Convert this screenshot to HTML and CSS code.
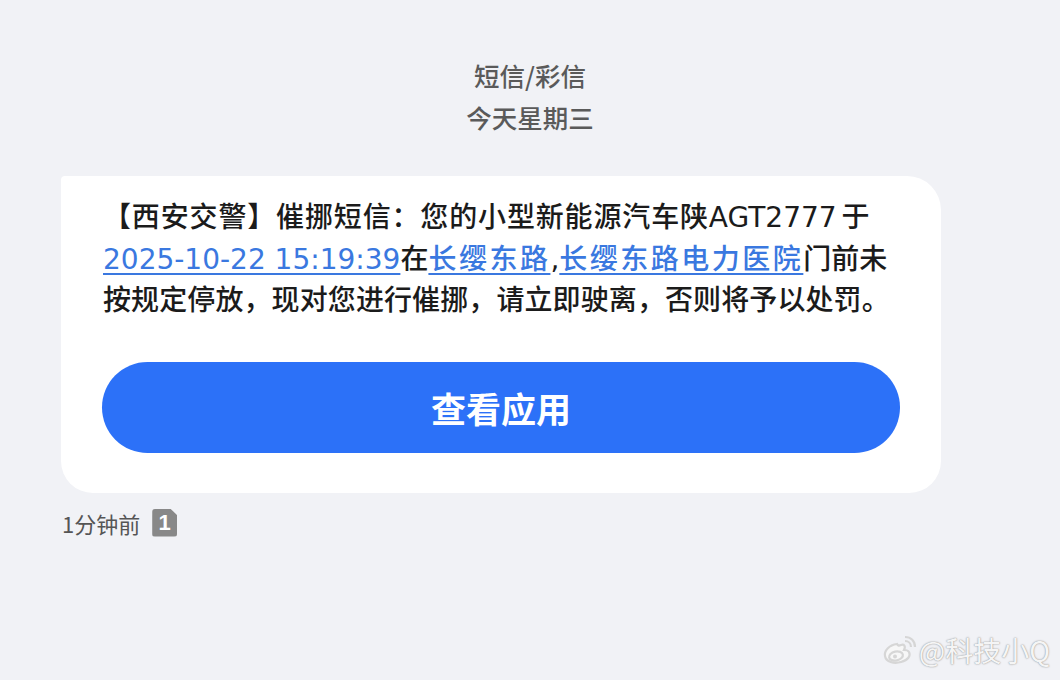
FILE: index.html
```html
<!DOCTYPE html>
<html lang="zh-CN">
<head>
  <meta charset="UTF-8" />
  <title>短信/彩信</title>
  <link rel="stylesheet" href="styles.css">
</head>
<body>

<header class="thread-head">
  <div class="head-line">短信/彩信</div>
  <div class="head-line">今天星期三</div>
</header>

<section class="bubble">
  <p class="msg"><span class="row-1">【西安交警】催挪短信：您的小型新能源汽车陕<span class="latin">AGT2777</span><span class="gap"></span>于</span><br><a class="link latin" href="#">2025-10-22 15:19:39</a>在<a class="link wide" href="#">长缨东路</a><span class="latin">,</span><a class="link wide" href="#">长缨东路电力医院</a>门前未<br><span class="row-3">按规定停放，现对您进行催挪，请立即驶离，否则将予以处罚。</span></p>
  <button class="app-btn">查看应用</button>
</section>

<div class="meta">
  <span class="ago">1分钟前</span>
  <span class="sim">1</span>
</div>

<div class="watermark">
  <svg class="weibo" width="34" height="30" viewBox="0 0 34 30">
    <g fill="none" stroke="#d6d6d6" stroke-width="2.2">
      <path d="M14 9 C6 10 1 16 2 21 C3 27 11 29 18 27 C25 25 28 21 26 17 C25 15 23 15 21 15 C23 11 21 9 18 10 C16 11 15 11 14 9 Z" fill="#f7f7f7"/>
      <ellipse cx="13" cy="21" rx="7" ry="4.5" transform="rotate(-12 13 21)"/>
      <circle cx="12" cy="21.5" r="2" fill="#d6d6d6" stroke="none"/>
      <path d="M22 2 C28 2 32 6 32 12"/>
      <path d="M22 6 C25.5 6 28 8.5 28 12"/>
    </g>
  </svg>
  <span class="wm-text">@科技小Q</span>
</div>

</body>
</html>
```

FILE: styles.css
```css
body {
  margin: 0;
  width: 1060px;
  height: 680px;
  background: #f1f2f6;
  font-family: "Noto Sans CJK SC", "Noto Sans", sans-serif;
  position: relative;
  overflow: hidden;
}
.thread-head {
  padding-top: 54px;
  text-align: center;
  color: #5a5a5a;
  font-size: 25.5px;
  font-weight: 500;
}
.head-line {
  line-height: 42px;
}
.bubble {
  margin: 38px 0 0 61px;
  width: 880px;
  box-sizing: border-box;
  padding: 19px 41px 40px 42px;
  background: #fff;
  border-radius: 4px 34px 32px 32px;
}
.msg {
  margin: 0;
  font-size: 28px;
  line-height: 41.5px;
  color: #1b1b1b;
  font-weight: 500;
  white-space: nowrap;
}
.row-1 {
  letter-spacing: 0.85px;
}
.row-3 {
  letter-spacing: 0.1px;
}
.latin {
  font-family: "DejaVu Sans", sans-serif;
  font-weight: 400;
  letter-spacing: 0;
  line-height: 1;
}
.gap {
  display: inline-block;
  width: 5px;
}
.link {
  color: #3a78e0;
  text-decoration: underline;
  text-decoration-thickness: 1.5px;
  text-underline-offset: 4px;
}
.wide {
  letter-spacing: 2.5px;
}
.app-btn {
  display: block;
  width: 798px;
  height: 91px;
  margin: 42px 0 0 -1px;
  border: none;
  border-radius: 46px;
  background: #2c71f8;
  color: #fff;
  font-family: inherit;
  font-size: 35px;
  font-weight: 700;
}
.meta {
  display: flex;
  align-items: center;
  gap: 12px;
  margin: 14px 0 0 62px;
}
.ago {
  font-size: 22px;
  color: #555;
}
.sim {
  width: 25px;
  height: 28px;
  background: #888;
  color: #fff;
  border-radius: 3px;
  clip-path: polygon(0 0, 72% 0, 100% 24%, 100% 100%, 0 100%);
  font-family: "Liberation Sans", sans-serif;
  font-weight: 700;
  font-size: 22px;
  line-height: 28px;
  text-align: center;
}
.watermark {
  position: absolute;
  right: 10px;
  bottom: 10px;
  display: flex;
  align-items: center;
  gap: 2px;
}
.wm-text {
  font-size: 28px;
  color: #f5f5f5;
  text-shadow: 0 0 1px #999, 0 0 2px #aaa;
}
```
